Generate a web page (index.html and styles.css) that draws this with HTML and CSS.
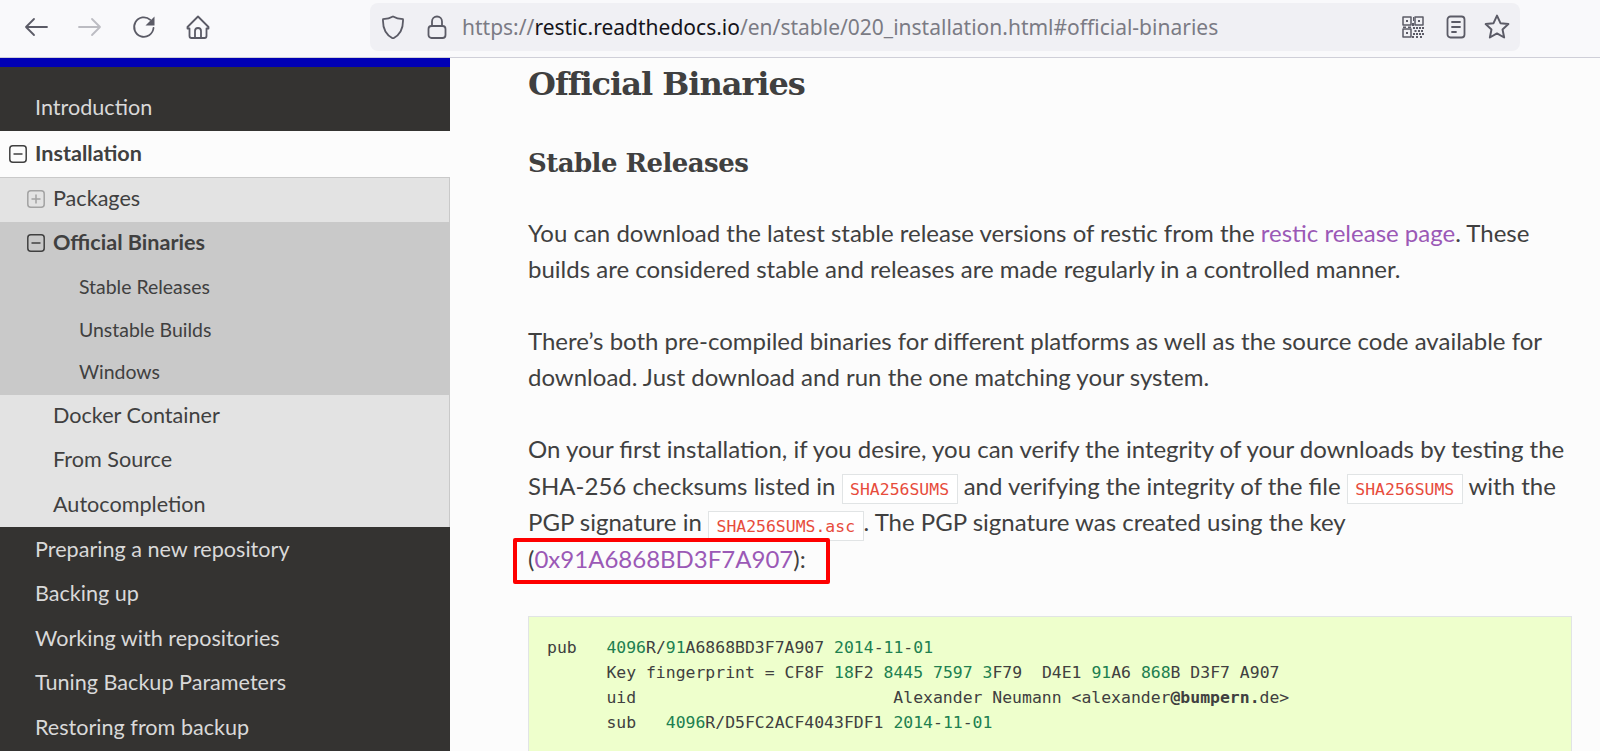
FILE: index.html
```html
<!DOCTYPE html>
<html lang="en">
<head>
  <meta charset="UTF-8" />
  <title>Installation - restic documentation</title>
  <link rel="stylesheet" href="styles.css">
</head>
<body>
  <header class="toolbar">
    <svg class="tool-icon" viewBox="0 0 24 24"><path d="M23 12H2M10 4l-8 8 8 8"/></svg>
    <svg class="tool-icon tool-off" viewBox="0 0 24 24"><path d="M1 12h21M14 4l8 8-8 8"/></svg>
    <svg class="tool-icon" viewBox="0 0 24 24"><path d="M21.5 13a9.7 9.7 0 1 1-3.2-8.2"/><path class="solid" d="M22.5 1.5v9h-9z"/></svg>
    <svg class="tool-icon" viewBox="0 0 24 24"><path d="M12 1.500L1.500 12v1.500H3.500V21a2 2 0 0 0 2 2h13a2 2 0 0 0 2-2v-7.500h2V12z"/><path d="M9 23v-7a3 3 0 0 1 6 0v7"/></svg>
    <div class="urlbar">
      <svg class="tool-icon" viewBox="0 0 24 24"><path d="M12 1.500c3 1.800 6 2.500 10 2.700 .4 9-2.500 15.500-10 19.300C4.500 19.700 1.600 13.200 2 4.200c4-.2 7-.9 10-2.700z"/></svg>
      <svg class="tool-icon lock-icon" viewBox="0 0 24 24"><rect x="3.500" y="11" width="17" height="12" rx="3"/><path d="M7 11V6.500a5 5 0 0 1 10 0V11"/></svg>
      <div class="url"><span>https://</span><b>restic.readthedocs.io</b><span>/en/stable/020_installation.html#official-binaries</span></div>
      <svg class="tool-icon qr-icon" viewBox="0 0 24 24"><path d="M2 2h8v8H2zM14 2h8v8h-8zM2 14h8v8H2z"/><path class="solid" d="M5 5h2v2H5zM17 5h2v2h-2zM5 17h2v2H5zM12 2h1v4h-1zM11 8h2v3h-2zM2 11.500h3v1.500H2zM7 11.500h3v1.500H7zM12 12h2v2h-2zM15 12h2v2h-2zM18 12h2v2h-2zM21 12h2v2h-2zM13.500 15h2v2h-2zM17 15h2v2h-2zM20 15h2v2h-2zM12 18h2v2h-2zM15 18h2v2h-2zM18 18h2v2h-2zM21 18h2v2h-2zM11 21h2v2h-2zM15 21h2v2h-2zM19 21h2v2h-2z"/></svg>
      <svg class="tool-icon reader-icon" viewBox="0 0 24 24"><rect x="3.500" y="1.500" width="17" height="21" rx="3"/><path d="M8 7h8M8 12h8M8 17h4"/></svg>
      <svg class="tool-icon star-icon" viewBox="0 0 24 24"><path d="M12 1.500l3.200 7 7.300.8-5.400 5 1.500 7.400-6.600-3.800-6.600 3.800 1.500-7.400-5.400-5 7.300-.8z"/></svg>
    </div>
  </header>

  <div class="page">
    <aside class="sidebar">
      <div class="side-top"></div>
      <nav class="menu">
        <a class="item" href="#">Introduction</a>
        <a class="item current" href="#"><svg class="toggle" viewBox="0 0 18 18"><rect x=".8" y=".8" width="16.400" height="16.400" rx="3"/><path d="M4.500 9h9"/></svg>Installation</a>
        <div class="sub">
          <a class="item lvl2" href="#"><svg class="toggle toggle-off" viewBox="0 0 18 18"><rect x=".8" y=".8" width="16.400" height="16.400" rx="3"/><path d="M4.500 9h9M9 4.500v9"/></svg>Packages</a>
          <div class="active-group">
            <a class="item lvl2 open" href="#"><svg class="toggle" viewBox="0 0 18 18"><rect x=".8" y=".8" width="16.400" height="16.400" rx="3"/><path d="M4.500 9h9"/></svg>Official Binaries</a>
            <a class="item lvl3" href="#">Stable Releases</a>
            <a class="item lvl3" href="#">Unstable Builds</a>
            <a class="item lvl3" href="#">Windows</a>
          </div>
          <a class="item lvl2" href="#">Docker Container</a>
          <a class="item lvl2" href="#">From Source</a>
          <a class="item lvl2" href="#">Autocompletion</a>
        </div>
        <a class="item" href="#">Preparing a new repository</a>
        <a class="item" href="#">Backing up</a>
        <a class="item" href="#">Working with repositories</a>
        <a class="item" href="#">Tuning Backup Parameters</a>
        <a class="item" href="#">Restoring from backup</a>
      </nav>
    </aside>

    <main class="content">
      <h2>Official Binaries</h2>
      <h3>Stable Releases</h3>
      <p>You can download the latest stable release versions of restic from the <a href="#">restic release page</a>. These builds are considered stable and releases are made regularly in a controlled manner.</p>
      <p>There’s both pre-compiled binaries for different platforms as well as the source code available for download. Just download and run the one matching your system.</p>
      <p class="key-note">On your first installation, if you desire, you can verify the integrity of your downloads by testing the SHA-256 checksums listed in <code>SHA256SUMS</code> and verifying the integrity of the file <code>SHA256SUMS</code> with the PGP signature in <code>SHA256SUMS.asc</code>. The PGP signature was created using the key (<a href="#">0x91A6868BD3F7A907</a>):</p>
      <div class="highlight-box"></div>
      <pre>pub   <i>4096</i>R/<i>91</i>A6868BD3F7A907 <i>2014</i>-<i>11</i>-<i>01</i>
      Key fingerprint = CF8F <i>18</i>F2 <i>8445</i> <i>7597</i> <i>3</i>F79  D4E1 <i>91</i>A6 <i>868</i>B D3F7 A907
      uid                          Alexander Neumann &lt;alexander<b>@bumpern.</b>de&gt;
      sub   <i>4096</i>R/D5FC2ACF4043FDF1 <i>2014</i>-<i>11</i>-<i>01</i>
</pre>
    </main>
  </div>
</body>
</html>
```

FILE: styles.css
```css
* {
  box-sizing: border-box;
}

html,
body {
  height: 751px;
  overflow: hidden;
}

body {
  margin: 0;
  font-family: Lato, sans-serif;
  color: #404040;
  background-color: #fcfcfc;
}

/* browser chrome */
.toolbar {
  display: flex;
  align-items: center;
  gap: 30px;
  height: 58px;
  padding: 3px 80px 7px 24px;
  background-color: #f9f9fb;
  border-bottom: 1px solid #cfcfd8;
}

.tool-icon {
  flex: none;
  width: 24px;
  height: 24px;
  fill: none;
  stroke: #5b5b66;
  stroke-width: 1.8;
  stroke-linejoin: round;
  stroke-linecap: round;
}

.tool-off {
  stroke: #bcbcc2;
}

.solid {
  fill: #5b5b66;
  stroke: none;
}

.urlbar {
  display: flex;
  align-items: center;
  gap: 20px;
  width: 1150px;
  height: 48px;
  margin-left: 130px;
  padding: 0 10px 0 11px;
  background-color: #f0f0f4;
  border-radius: 8px;
}

.lock-icon {
  margin-right: -4px;
}

.url {
  flex: 1;
  margin-left: -3px;
  font-family: "Noto Sans", sans-serif;
  font-size: 21px;
  color: #7b7b84;
  white-space: nowrap;
}

.url b {
  font-weight: 400;
  color: #15141a;
}

.qr-icon {
  margin-right: -1px;
  stroke-width: 1.5;
}

.reader-icon {
  margin-right: -2px;
}

.star-icon {
  width: 26px;
  height: 26px;
  margin-left: -2px;
}

/* layout */
.page {
  display: flex;
  height: 693px;
}

.sidebar {
  flex: none;
  width: 450px;
  height: 100%;
  background-color: #343331;
}

.side-top {
  height: 9px;
  background-color: #0000b4;
}

.menu {
  margin-top: 19px;
}

.item {
  display: block;
  height: 44.500px;
  padding: 8.500px 0 0 35px;
  font-size: 21.600px;
  line-height: 27px;
  color: #d9d9d9;
  text-decoration: none;
  white-space: nowrap;
}

.item:first-child {
  padding-top: 7.500px;
}

.toggle {
  position: absolute;
  width: 18px;
  height: 18px;
  margin: 5px 0 0 -26px;
  fill: none;
  stroke: #404040;
  stroke-width: 1.500;
}

.toggle-off {
  stroke: #a3a3a3;
}

.current {
  height: 46px;
  padding-top: 9px;
  font-weight: 700;
  color: #404040;
  background-color: #fcfcfc;
}

.sub {
  background-color: #e3e3e3;
  border-top: 1px solid #c9c9c9;
  border-right: 1px solid #c9c9c9;
}

.lvl2 {
  height: 44.200px;
  padding: 7.500px 0 0 53px;
  color: #404040;
}

.active-group {
  background-color: #c9c9c9;
  margin-right: -1px;
}

.open {
  height: 45px;
  padding-top: 8px;
  font-weight: 700;
}

.lvl3 {
  height: 42.670px;
  padding: 7.300px 0 0 79px;
  font-size: 19.440px;
  line-height: 26px;
  color: #404040;
}

/* article */
.content {
  position: relative;
  flex: 1;
  padding: 0 28px 0 78px;
  font-size: 24px;
  line-height: 36px;
}

h2,
h3 {
  margin: 0;
  font-family: "DejaVu Serif", serif;
  font-weight: 700;
}

h2 {
  margin-top: 5px;
  font-size: 32px;
  line-height: 42px;
  letter-spacing: -1px;
}

h3 {
  margin-top: 40px;
  font-size: 26px;
  line-height: 36px;
  letter-spacing: -.55px;
}

p {
  margin: 36px 0;
}

h3 + p {
  margin-top: 34px;
}

.key-note {
  line-height: 36.700px;
}

.content a {
  color: #9b59b6;
  text-decoration: none;
}

code {
  padding: 4.500px 7.500px;
  font-family: "DejaVu Sans Mono", monospace;
  font-size: 16.450px;
  line-height: 1;
  color: #e74c3c;
  background-color: #fff;
  border: 1px solid #e1e4e5;
}

pre {
  margin: 38px 0 0;
  padding: 18px;
  font-family: "DejaVu Sans Mono", monospace;
  font-size: 16.450px;
  line-height: 25.200px;
  color: #404040;
  background-color: #eeffcc;
  border: 1px solid #e1e4e5;
}

pre i {
  font-style: normal;
  color: #208050;
}

/* red annotation drawn over the screenshot */
.highlight-box {
  position: absolute;
  left: 63px;
  top: 480px;
  width: 317px;
  height: 46px;
  border: 4px solid #fe0000;
  border-radius: 2px;
}
```
